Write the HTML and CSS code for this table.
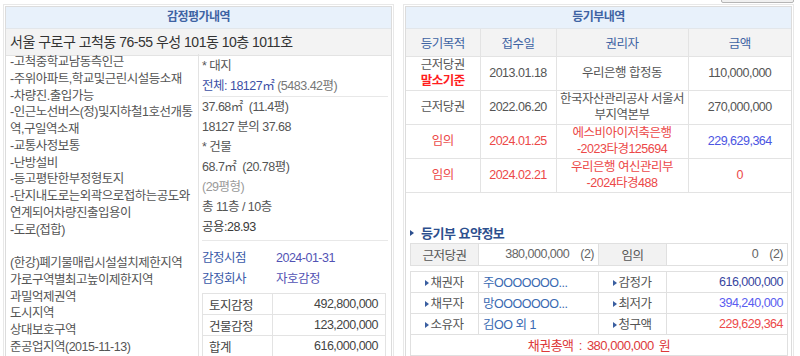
FILE: index.html
```html
<!DOCTYPE html>
<html lang="ko">
<head>
<meta charset="utf-8">
<title>감정평가 / 등기부</title>
<link rel="stylesheet" href="styles.css">
</head>
<body>
<div class="toolbar"><span class="tool-btn"></span></div>
<div class="panels">
  <section class="panel">
    <div class="box">
      <div class="box-title">감정평가내역</div>
      <div class="address">서울 구로구 고척동 76-55 우성 101동 10층 1011호</div>
      <div class="appraisal">
        <div class="remarks">
          -고척중학교남동측인근<br>
          -주위아파트,학교및근린시설등소재<br>
          -차량진.출입가능<br>
          -인근노선버스(정)및지하철1호선개통<br>
          역,구일역소재<br>
          -교통사정보통<br>
          -난방설비<br>
          -등고평탄한부정형토지<br>
          -단지내도로는외곽으로접하는공도와<br>
          연계되어차량진출입용이<br>
          -도로(접합)<br>
          <br>
          (한강)폐기물매립시설설치제한지역<br>
          가로구역별최고높이제한지역<br>
          과밀억제권역<br>
          도시지역<br>
          상대보호구역<br>
          준공업지역(2015-11-13)
        </div>
        <div class="details">
          <div class="group group-land">
            <div class="line">* 대지</div>
            <div class="line"><span class="blue">전체: 18127㎡</span> <span class="muted">(5483.42평)</span></div>
          </div>
          <div class="group group-area">
            <div class="line">37.68㎡ &nbsp;(11.4평)</div>
            <div class="line">18127 분의 37.68</div>
            <div class="line">* 건물</div>
            <div class="line">68.7㎡ &nbsp;(20.78평)</div>
            <div class="line light">(29평형)</div>
            <div class="line">총 11층 / 10층</div>
            <div class="line dark">공용:28.93</div>
          </div>
          <div class="group group-value">
            <dl class="meta">
              <dt>감정시점</dt><dd>2024-01-31</dd>
              <dt>감정회사</dt><dd>자호감정</dd>
            </dl>
            <table class="amounts">
              <tr><th>토지감정</th><td>492,800,000</td></tr>
              <tr><th>건물감정</th><td>123,200,000</td></tr>
              <tr><th>합계</th><td>616,000,000</td></tr>
            </table>
          </div>
        </div>
      </div>
    </div>
  </section>

  <section class="panel">
    <div class="box">
      <div class="box-title">등기부내역</div>
      <table class="reg">
        <colgroup><col class="c1"><col class="c2"><col class="c3"><col class="c4"></colgroup>
        <thead>
          <tr><th>등기목적</th><th>접수일</th><th>권리자</th><th>금액</th></tr>
        </thead>
        <tbody>
          <tr><td>근저당권<br><strong class="base">말소기준</strong></td><td>2013.01.18</td><td>우리은행 합정동</td><td>110,000,000</td></tr>
          <tr><td>근저당권</td><td>2022.06.20</td><td>한국자산관리공사 서울서<br>부지역본부</td><td>270,000,000</td></tr>
          <tr class="auction"><td>임의</td><td>2024.01.25</td><td>에스비아이저축은행<br>-2023타경125694</td><td class="claim">229,629,364</td></tr>
          <tr class="auction"><td>임의</td><td>2024.02.21</td><td>우리은행 여신관리부<br>-2024타경488</td><td>0</td></tr>
        </tbody>
      </table>
      <div class="summary">
        <h3 class="summary-title"><span class="tri"></span>등기부 요약정보</h3>
        <table class="sum sum-top">
          <colgroup><col class="s1"><col class="s2"><col class="s3"><col class="s4"></colgroup>
          <tr><th>근저당권</th><td class="num">380,000,000<span class="count">(2)</span></td><th>임의</th><td class="num">0<span class="count">(2)</span></td></tr>
        </table>
        <table class="sum sum-parties">
          <colgroup><col class="s1"><col class="s2"><col class="s3"><col class="s4"></colgroup>
          <tr><th><span class="mini-tri"></span>채권자</th><td class="party">주OOOOOOO...</td><th><span class="mini-tri"></span>감정가</th><td class="num appraised">616,000,000</td></tr>
          <tr><th><span class="mini-tri"></span>채무자</th><td class="party">망OOOOOOO...</td><th><span class="mini-tri"></span>최저가</th><td class="num minimum">394,240,000</td></tr>
          <tr><th><span class="mini-tri"></span>소유자</th><td class="party">김OO 외 1</td><th><span class="mini-tri"></span>청구액</th><td class="num claimed">229,629,364</td></tr>
          <tr><td class="total" colspan="4">채권총액 : 380,000,000 원</td></tr>
        </table>
      </div>
    </div>
  </section>
</div>
</body>
</html>
```

FILE: styles.css
```css
* { box-sizing: border-box; }
html, body { margin: 0; }
body {
  width: 800px;
  height: 356px;
  overflow: hidden;
  padding: 0 6px 0 3px;
  background: #fff;
  font-family: "Liberation Sans", "Noto Sans CJK KR", sans-serif;
  font-size: 12.5px;
  letter-spacing: -0.5px;
  color: #555;
}

.toolbar {
  height: 4px;
  display: flex;
  justify-content: flex-end;
  align-items: flex-end;
  overflow: hidden;
}
.tool-btn {
  display: block;
  width: 73px;
  height: 20px;
  margin-bottom: 1px;
  border: 1px solid #b5b5b5;
  border-radius: 2px;
  background: #f0f0f0;
}

.panels {
  display: flex;
  gap: 9px;
  align-items: flex-start;
}
.panel {
  width: 391px;
  height: 380px;
  border: 1px solid #e8e8e8;
  padding: 1px;
  background: #fff;
}
.box {
  height: 100%;
  border: 1px solid #dcdcdc;
}
.box-title {
  height: 22px;
  line-height: 21px;
  text-align: center;
  background: #e8f1fb;
  border-bottom: 1px solid #e2e6ea;
  color: #3e63a3;
  font-size: 12px;
  font-weight: bold;
}

/* left panel */
.address {
  height: 27px;
  line-height: 26px;
  padding-left: 4px;
  background: #f3f3f3;
  border-bottom: 1px solid #e3e3e3;
  color: #333;
  font-size: 14px;
}
.appraisal {
  display: flex;
}
.remarks {
  width: 193px;
  flex: none;
  margin-top: -2px;
  padding: 0 2px 0 4px;
  border-right: 1px solid #e3e3e3;
  line-height: 16.75px;
  white-space: nowrap;
  color: #555;
}
.details {
  flex: 1;
  padding: 0 3px;
}
.line { height: 20px; line-height: 20px; white-space: nowrap; }
.group-land { border-bottom: 1px solid #e8e8e8; }
.group-area { padding-bottom: 3px; border-bottom: 1px solid #e8e8e8; }
.group-value { padding-top: 7px; }
.blue { color: #3c4fa6; }
.muted { color: #777; }
.light { color: #9a9a9a; }
.dark { color: #3a3a3a; }

.meta {
  display: grid;
  grid-template-columns: 74px 1fr;
  margin: 0 0 3px;
  line-height: 21px;
}
.meta dt { color: #3a5aa8; }
.meta dd { margin: 0; color: #5252b4; }

.amounts {
  width: 184px;
  border-collapse: collapse;
}
.amounts th, .amounts td {
  height: 21px;
  padding: 0;
  border: 1px solid #e3e3e3;
  font-weight: normal;
}
.amounts th {
  width: 70px;
  text-align: left;
  padding-left: 6px;
  color: #444;
}
.amounts td {
  text-align: right;
  padding-right: 7px;
  color: #444;
}

/* right panel */
.reg {
  width: 100%;
  table-layout: fixed;
  border-collapse: collapse;
}
.reg .c1 { width: 74px; }
.reg .c2 { width: 76px; }
.reg .c3 { width: 132px; }
.reg .c4 { width: 103px; }
.reg th {
  height: 27px;
  background: #f3f3f3;
  color: #3e63a3;
  font-weight: normal;
  border: 1px solid #e3e3e3;
  border-top: 0;
  padding: 0;
}
.reg td {
  text-align: center;
  line-height: 16.5px;
  padding: 0;
  border: 1px solid #e3e3e3;
  color: #555;
  white-space: nowrap;
}
.reg tr > :first-child { border-left: 0; }
.reg tr > :last-child { border-right: 0; }
.base { color: #ff1e1e; }
.reg .auction td { color: #ec4848; }
.reg .auction td.claim { color: #4b55e2; }

.summary {
  padding: 0 3px 0 4px;
}
.summary-title {
  margin: 32px 0 1px;
  height: 17px;
  line-height: 17px;
  font-size: 13px;
  color: #2c4f8e;
  display: flex;
  align-items: center;
}
.tri {
  width: 0;
  height: 0;
  border-left: 4px solid #2c4f8e;
  border-top: 3px solid transparent;
  border-bottom: 3px solid transparent;
  margin-right: 7px;
}
.sum {
  width: 100%;
  table-layout: fixed;
  border-collapse: collapse;
}
.sum .s1 { width: 68px; }
.sum .s2 { width: 120px; }
.sum .s3 { width: 68px; }
.sum .s4 { width: 121px; }
.sum th, .sum td {
  border: 1px solid #e0e0e0;
  padding: 0 4px;
  font-weight: normal;
  white-space: nowrap;
}
.sum-top th, .sum-top td { height: 22px; }
.sum-top th { background: #f2f2f2; color: #555; }
.count { margin-left: 11px; }
.sum-parties { margin-top: 5px; }
.sum-parties th, .sum-parties td { height: 21px; }
.sum-parties th { background: #fff; color: #555; text-align: center; }
.num { text-align: right; color: #666; }
.party { color: #3a6ab2; }
.appraised { color: #3946a0; }
.minimum { color: #5a5cf0; }
.claimed { color: #ec4a4a; }
.mini-tri {
  display: inline-block;
  width: 0;
  height: 0;
  border-left: 4px solid #3a5ea0;
  border-top: 3px solid transparent;
  border-bottom: 3px solid transparent;
  margin-right: 1px;
  vertical-align: 1px;
}
.total {
  text-align: center;
  color: #dd3a3a;
  font-weight: bold;
  font-size: 13px;
  word-spacing: 2px;
}
```
